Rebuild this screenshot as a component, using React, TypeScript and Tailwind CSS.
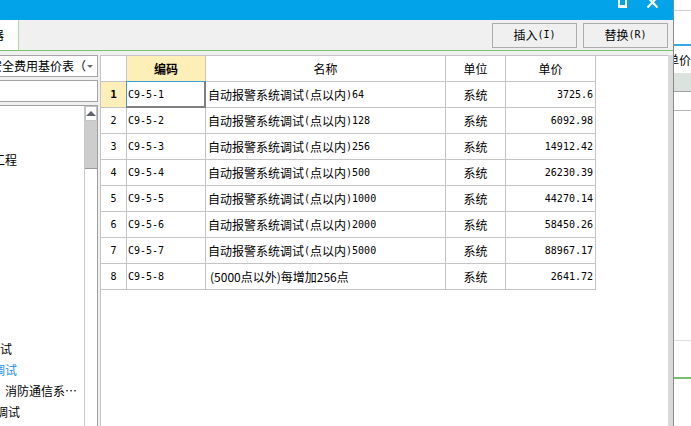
import React from "react";

const rows = [
  ["C9-5-1", "自动报警系统调试(点以内)64", "3725.6"],
  ["C9-5-2", "自动报警系统调试(点以内)128", "6092.98"],
  ["C9-5-3", "自动报警系统调试(点以内)256", "14912.42"],
  ["C9-5-4", "自动报警系统调试(点以内)500", "26230.39"],
  ["C9-5-5", "自动报警系统调试(点以内)1000", "44270.14"],
  ["C9-5-6", "自动报警系统调试(点以内)2000", "58450.26"],
  ["C9-5-7", "自动报警系统调试(点以内)5000", "88967.17"],
  ["C9-5-8", "(5000点以外)每增加256点", "2641.72"],
];

function Mixed({ t }: { t: string }) {
  const parts = t.match(/[\x00-\x7f]+|[^\x00-\x7f]+/g) || [];
  return (
    <>
      {parts.map((p, i) =>
        /^[\x00-\x7f]/.test(p) ? (
          <span key={i} className="font-['DejaVu_Sans_Mono',monospace] text-[10px]">
            {p}
          </span>
        ) : (
          <span key={i}>{p}</span>
        )
      )}
    </>
  );
}

const mono = "font-['DejaVu_Sans_Mono',monospace] text-[10px]";

function TreeRow({ children }: { children?: React.ReactNode }) {
  return <div className="h-[21px] flex items-center whitespace-nowrap leading-none">{children}</div>;
}

export default function App() {
  return (
    <div className="w-[691px] h-[426px] flex overflow-hidden bg-white font-['Noto_Sans_CJK_SC',sans-serif] text-[12px] text-black">
      {/* Dialog */}
      <div className="w-[674px] h-full flex flex-col border-r border-[#8a8a8a] shrink-0">
        {/* title bar */}
        <div className="h-[20px] bg-[#03a3e9] flex justify-end items-start pr-[15px] gap-[20px] shrink-0 overflow-hidden">
          <svg width="9" height="8" viewBox="0 0 9 8" className="block">
            <rect x="1" y="-4" width="7" height="10" fill="none" stroke="white" strokeWidth="2" />
            <line x1="0" y1="6.5" x2="9" y2="6.5" stroke="white" strokeWidth="3" />
          </svg>
          <svg width="11" height="8" viewBox="0 0 11 8" className="block">
            <line x1="0.5" y1="-3" x2="10.5" y2="7.5" stroke="white" strokeWidth="2.2" />
            <line x1="10.5" y1="-3" x2="0.5" y2="7.5" stroke="white" strokeWidth="2.2" />
          </svg>
        </div>
        {/* toolbar */}
        <div className="h-[31px] bg-[#f0f0f0] border-b border-[#7dc36f] flex items-center shrink-0">
          <div className="w-[19px] h-full bg-white border-r border-[#a8dc92] overflow-hidden flex items-center">
            <span className="ml-[-8px] whitespace-nowrap leading-none">器</span>
          </div>
          <div className="flex-1" />
          <button className="w-[85px] h-[25px] border border-[#acacac] bg-[#f0f0f0] flex items-center justify-center leading-none">
            <Mixed t="插入(I)" />
          </button>
          <button className="ml-[6px] mr-[5px] w-[85px] h-[25px] border border-[#acacac] bg-[#f0f0f0] flex items-center justify-center leading-none">
            <Mixed t="替换(R)" />
          </button>
        </div>
        {/* body */}
        <div className="flex-1 flex bg-[#f0f0f0] pt-[4px] min-h-0">
          {/* left panel */}
          <div className="w-[98px] flex flex-col shrink-0">
            <div className="h-[22px] bg-white border border-l-0 border-[#a5a5a5] flex items-center overflow-hidden relative">
              <span className="ml-[-10px] whitespace-nowrap leading-none">安全费用基价表（</span>
              <div className="absolute right-[4px] top-[9px] w-0 h-0 border-l-[3px] border-r-[3px] border-t-[3px] border-l-transparent border-r-transparent border-t-[#6b6b6b]" />
            </div>
            <div className="mt-[3px] h-[22px] bg-white border border-l-0 border-[#a5a5a5]" />
            <div className="mt-[3px] flex-1 bg-white border border-l-0 border-b-0 border-[#a0a0a0] flex min-h-0">
              <div className="flex-1 overflow-hidden pt-[1px]">
                <TreeRow />
                <TreeRow />
                <TreeRow>
                  <span className="ml-[-7px]">工程</span>
                </TreeRow>
                <TreeRow />
                <TreeRow />
                <TreeRow />
                <TreeRow />
                <TreeRow />
                <TreeRow />
                <TreeRow />
                <TreeRow />
                <TreeRow>
                  <span className="ml-[-12px]">调试</span>
                </TreeRow>
                <TreeRow>
                  <span className="ml-[-7px] text-[#1a8cf0]">调试</span>
                </TreeRow>
                <TreeRow>
                  <span className="ml-[5px]">消防通信系…</span>
                </TreeRow>
                <TreeRow>
                  <span className="ml-[-4px]">调试</span>
                </TreeRow>
              </div>
              <div className="w-[13px] flex flex-col border-l border-[#c8c8c8]">
                <div className="h-[15px] bg-white border border-[#c4c4c4] flex items-center justify-center">
                  <div className="w-0 h-0 border-l-[5px] border-r-[5px] border-b-[5px] border-l-transparent border-r-transparent border-b-[#5f636e]" />
                </div>
                <div className="h-[48px] bg-[#cdcdcd] border-b border-[#9a9a9a]" />
                <div className="flex-1 bg-white" />
              </div>
            </div>
          </div>
          {/* table panel */}
          <div className="ml-[2px] flex-1 bg-white border-t border-l border-[#c4c4c4] overflow-hidden">
            {/* header */}
            <div className="flex h-[26px]">
              <div className="w-[26px] border-r border-b border-[#c4c4c4]" />
              <div className="w-[79px] border-r border-b border-[#c4c4c4] bg-[#feeeb7] flex items-center justify-center font-bold leading-none">
                编码
              </div>
              <div className="w-[240px] border-r border-b border-[#c4c4c4] flex items-center justify-center leading-none">
                名称
              </div>
              <div className="w-[60px] border-r border-b border-[#c4c4c4] flex items-center justify-center leading-none">
                单位
              </div>
              <div className="w-[90px] border-r border-b border-[#c4c4c4] flex items-center justify-center leading-none">
                单价
              </div>
            </div>
            {rows.map((r, i) => (
              <div key={i} className="flex h-[26px]">
                <div
                  className={
                    i === 0
                      ? "w-[26px] border-r border-b border-[#c4c4c4] bg-[#feeeb7] flex items-center justify-center font-bold font-['DejaVu_Sans_Mono',monospace] text-[11px] leading-none"
                      : `w-[26px] border-r border-b border-[#c4c4c4] flex items-center justify-center leading-none ${mono}`
                  }
                >
                  {i + 1}
                </div>
                <div className={`relative w-[79px] border-r border-b border-[#c4c4c4] flex items-center pl-[1px] leading-none ${mono}`}>
                  {r[0]}
                  {i === 0 && (
                    <div className="absolute left-[-1px] top-[-1px] right-[-1px] bottom-[-1px] border-l border-t border-[#3a9fd8] border-r-2 border-b-2 border-r-[#7f7f7f] border-b-[#7f7f7f]" />
                  )}
                </div>
                <div className={`w-[240px] border-r border-b border-[#c4c4c4] flex items-center whitespace-nowrap leading-none ${i === 7 ? "pl-[4px]" : "pl-[2px]"}`}>
                  {i === 7 ? r[1] : <Mixed t={r[1]} />}
                </div>
                <div className="w-[60px] border-r border-b border-[#c4c4c4] flex items-center justify-center leading-none">
                  系统
                </div>
                <div className={`w-[90px] border-r border-b border-[#c4c4c4] flex items-center justify-end pr-[2px] leading-none ${mono}`}>
                  {r[2]}
                </div>
              </div>
            ))}
          </div>
          <div className="w-[5px] bg-[#d9d9d9] border-t border-[#d9d9d9]" />
        </div>
      </div>
      {/* right strip: window behind */}
      <div className="flex-1 flex flex-col overflow-hidden bg-white">
        <div className="h-[11px] border-b border-[#cfcfcf] shrink-0" />
        <div className="h-[33px] shrink-0" />
        <div className="h-[2px] bg-[#3aa7e2] shrink-0" />
        <div className="h-[27px] flex items-center shrink-0 overflow-hidden">
          <span className="ml-[-7px] whitespace-nowrap leading-none">单价</span>
        </div>
        <div className="h-[19px] bg-[#dce3de] border-b border-[#a0a0a0] shrink-0" />
        <div className="h-[19px] border-b border-[#b4b4b4] shrink-0" />
        <div className="h-[230px] border-b border-[#e0e0e0] shrink-0" />
        <div className="h-[38px] border-b-2 border-[#72c267] shrink-0" />
        <div className="flex-1" />
      </div>
    </div>
  );
}
